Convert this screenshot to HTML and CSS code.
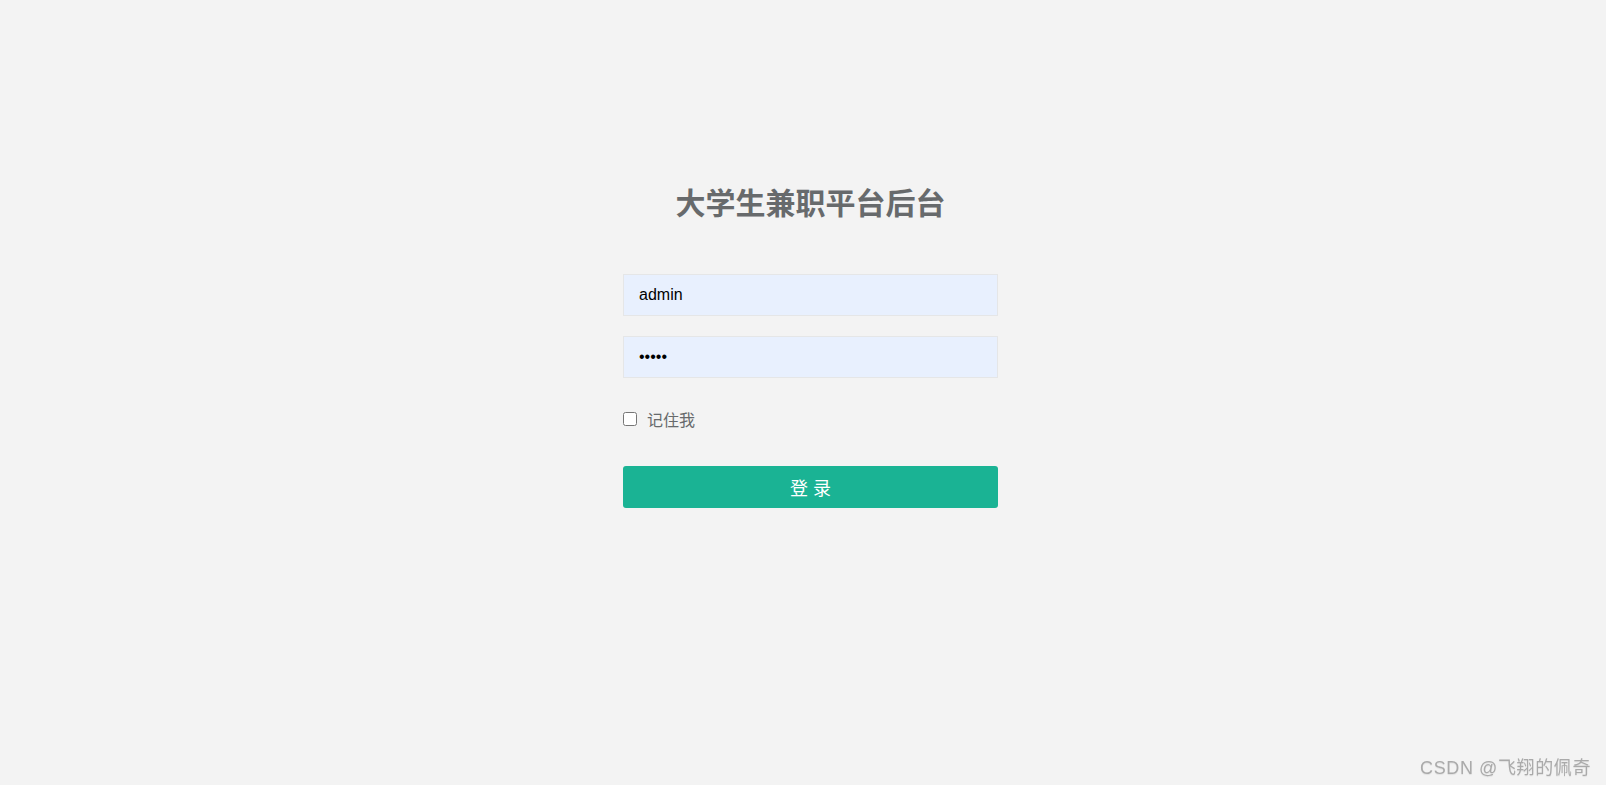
FILE: index.html
```html
<!DOCTYPE html>
<html lang="zh-CN">
<head>
    <meta charset="UTF-8">
    <meta name="viewport" content="width=device-width, initial-scale=1.0">
    <title>大学生兼职平台后台</title>
    <link rel="stylesheet" href="styles.css">
</head>
<body>
    <div class="login-box">
        <h3 class="title">大学生兼职平台后台</h3>
        <form class="login-form" action="#" method="post">
            <input class="form-control" type="text" name="username" value="admin">
            <input class="form-control" type="password" name="password" value="admin">
            <label class="remember">
                <input type="checkbox" name="remember">
                <span>记住我</span>
            </label>
            <button class="btn-login" type="submit">登 录</button>
        </form>
    </div>
    <div class="watermark">CSDN @飞翔的佩奇</div>
</body>
</html>
```

FILE: styles.css
```css
body { margin: 0; background: #f3f3f3; font-family: "Liberation Sans", "Noto Sans CJK SC", sans-serif; color: #676a6c; }
.login-box { width: 390px; margin: 0 auto; padding: 184px 0 0 15px; box-sizing: border-box; }
.title { margin: 0 0 50px; font-size: 30px; line-height: 40px; font-weight: bold; text-align: center; color: #676a6c; }
.login-form { display: flex; flex-direction: column; }
.form-control { display: block; width: 100%; height: 42px; box-sizing: border-box; margin: 0 0 20px; padding: 0 15px; border: 1px solid #e5e6e7; background: #e8f0fe; font-family: "Liberation Sans", sans-serif; font-size: 16px; color: #000; outline: none; }
.form-control + .form-control { margin-bottom: 0; }
.remember { display: flex; align-items: center; height: 22px; margin-top: 30px; font-size: 16px; color: #676a6c; }
.remember input { width: 14px; height: 14px; margin: 0 10px 0 0; }
.btn-login { margin-top: 36px; height: 42px; width: 100%; border: none; border-radius: 3px; background: #1ab394; color: #fff; font-family: "Liberation Sans", "Noto Sans CJK SC", sans-serif; font-size: 18px; cursor: pointer; }
.watermark { position: fixed; right: 15px; bottom: 6px; font-size: 18px; letter-spacing: 0.6px; color: #aaa; text-shadow: 0 1px 1px rgba(0,0,0,0.08); }
```
